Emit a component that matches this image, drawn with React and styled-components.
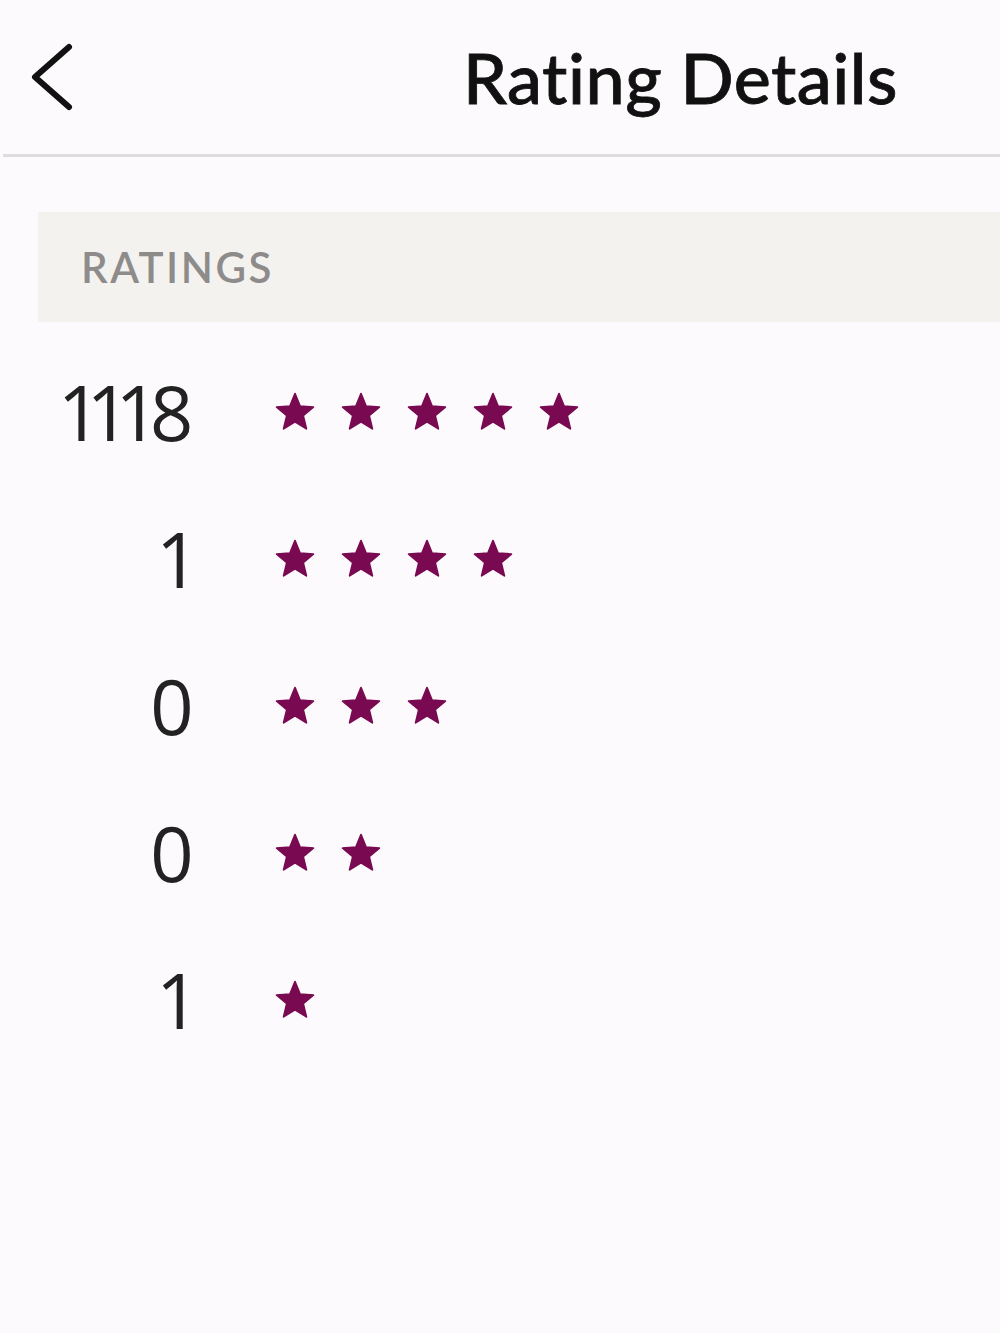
import React from "react";
import styled, { createGlobalStyle } from "styled-components";

const Global = createGlobalStyle`
  html, body {
    margin: 0;
    padding: 0;
    background: #fcfafc;
  }
  body {
    font-family: Lato, "Open Sans", sans-serif;
  }
`;

const Page = styled.div`
  width: 1000px;
  height: 1333px;
  background: #fcfafc;
  overflow: hidden;
`;

const Header = styled.div`
  display: flex;
  align-items: center;
  height: 154px;
  padding-left: 24px;
  border-bottom: 3px solid #dedcde;
  margin-left: 3px;
`;

const BackButton = styled.button`
  display: flex;
  border: none;
  background: none;
  padding: 0;
  cursor: pointer;
`;

const Title = styled.h1`
  margin: 0 0 0 388px;
  font-size: 70px;
  font-weight: 500;
  color: #111;
  letter-spacing: 0.5px;
  -webkit-text-stroke: 0.8px #111;
`;

const Section = styled.div`
  margin: 55px 0 0 38px;
  height: 110px;
  background: #f3f2ef;
  display: flex;
  align-items: center;
  padding-left: 43px;
`;

const SectionLabel = styled.span`
  font-size: 42px;
  font-weight: 600;
  color: #8e8b8b;
  letter-spacing: 2.5px;
`;

const List = styled.div`
  display: flex;
  flex-direction: column;
  padding-top: 16px;
`;

const Row = styled.div`
  display: flex;
  align-items: center;
  height: 147px;
`;

const Count = styled.span`
  width: 190px;
  text-align: right;
  font-family: "Open Sans", Lato, sans-serif;
  font-size: 76px;
  font-weight: 400;
  color: #222;
  font-variant-numeric: proportional-nums;
  letter-spacing: -4px;
`;

const Stars = styled.div`
  display: flex;
  gap: 24px;
  margin-left: 84px;
`;

function Star() {
  return (
    <svg width="42" height="42" viewBox="0 0 24 24">
      <polygon
        points="12,1.5 14.9,8.6 22.5,9.2 16.7,14.1 18.5,21.6 12,17.6 5.5,21.6 7.3,14.1 1.5,9.2 9.1,8.6"
        fill="#790a52"
        stroke="#790a52"
        strokeWidth="1"
        strokeLinejoin="round"
      />
    </svg>
  );
}

const ratings = [
  { stars: 5, count: 1118 },
  { stars: 4, count: 1 },
  { stars: 3, count: 0 },
  { stars: 2, count: 0 },
  { stars: 1, count: 1 },
];

export default function App() {
  return (
    <Page>
      <Global />
      <Header>
        <BackButton aria-label="Back">
          <svg width="48" height="70" viewBox="0 0 48 70">
            <polyline
              points="42,5 8,35 42,65"
              fill="none"
              stroke="#111"
              strokeWidth="6"
              strokeLinecap="round"
              strokeLinejoin="round"
            />
          </svg>
        </BackButton>
        <Title>Rating Details</Title>
      </Header>
      <Section>
        <SectionLabel>RATINGS</SectionLabel>
      </Section>
      <List>
        {ratings.map((r) => (
          <Row key={r.stars}>
            <Count>{r.count}</Count>
            <Stars>
              {Array.from({ length: r.stars }).map((_, i) => (
                <Star key={i} />
              ))}
            </Stars>
          </Row>
        ))}
      </List>
    </Page>
  );
}
